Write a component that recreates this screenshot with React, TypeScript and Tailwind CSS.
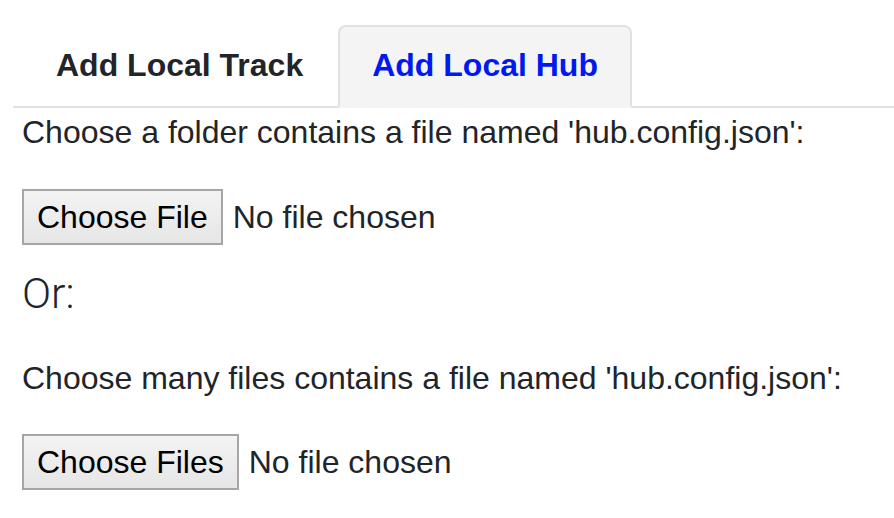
import { useState } from "react";

const FONT = { fontFamily: '"Liberation Sans", Arial, sans-serif' };

const TABS = ["Add Local Track", "Add Local Hub"];

const FilePicker = ({ label }: { label: string }) => (
  <div className="flex items-center gap-[10px]">
    <button className="h-[56px] px-[13px] border-2 border-[#a6a6a6] bg-gradient-to-b from-[#f3f3f3] to-[#e6e6e6] text-black text-[32px] leading-none">
      {label}
    </button>
    <span className="text-[32px] text-[#212529] leading-none">No file chosen</span>
  </div>
);

export default function App() {
  const [active, setActive] = useState(1);

  return (
    <div className="w-[894px] h-[518px] bg-white pt-[25px] pl-[13px] overflow-hidden" style={FONT}>
      {/* Tabs */}
      <div className="flex border-b-2 border-[#dee2e6]">
        {TABS.map((tab, i) => (
          <button
            key={tab}
            onClick={() => setActive(i)}
            className={`h-[83px] -mb-[2px] px-[32px] pb-[4px] border-2 rounded-t-[8px] text-[32px] font-bold ${
              i === 0 ? "ml-[9px] mr-[1px]" : ""
            } ${
              active === i
                ? "bg-[#f4f4f5] border-[#dee2e6] border-b-[#f4f4f5] text-[#0019f0]"
                : "border-transparent text-[#212529]"
            }`}
          >
            {tab}
          </button>
        ))}
      </div>

      {/* Content */}
      <div className="pl-[9px] text-[#212529]">
        <p className="text-[32px] leading-[48px]">Choose a folder contains a file named 'hub.config.json':</p>
        <div className="mt-[33px]">
          <FilePicker label="Choose File" />
        </div>
        <div
          className="mt-[24px] text-[43px] leading-[48px] font-light"
          style={{ fontFamily: 'Roboto, "Liberation Sans", sans-serif' }}
        >
          Or:
        </div>
        <p className="mt-[37px] text-[32px] leading-[48px]">Choose many files contains a file named 'hub.config.json':</p>
        <div className="mt-[32px]">
          <FilePicker label="Choose Files" />
        </div>
      </div>
    </div>
  );
}
